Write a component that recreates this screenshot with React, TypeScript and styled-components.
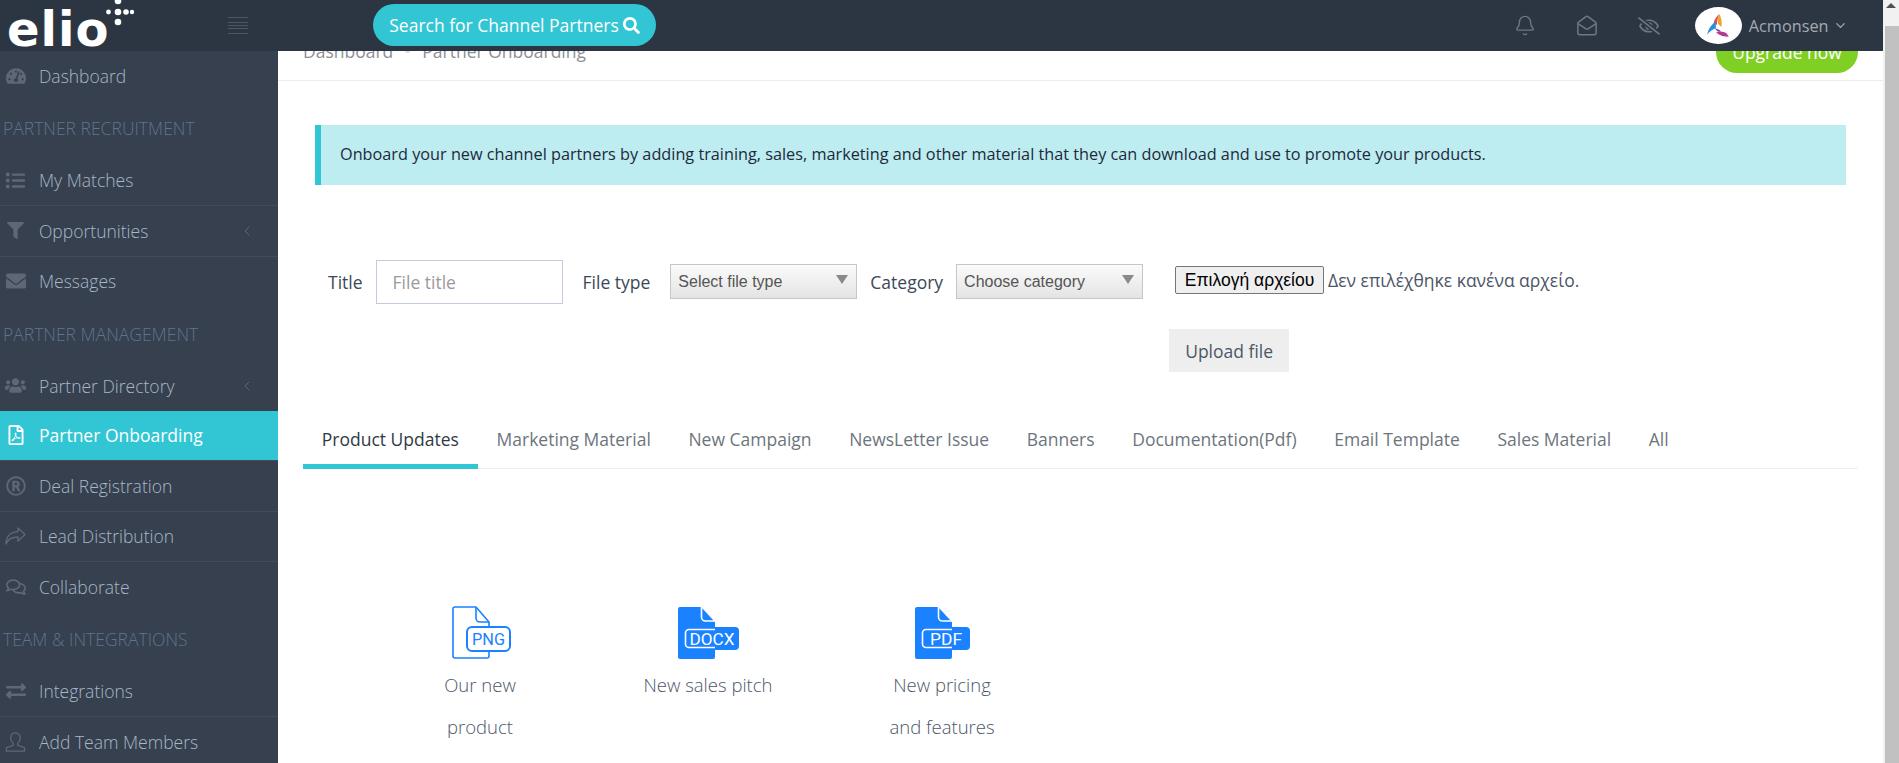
import styled, { createGlobalStyle } from 'styled-components';
import { Bell, ChevronDown, ChevronLeft, MailOpen } from 'lucide-react';
import {
  FaEnvelope,
  FaExchangeAlt,
  FaFilter,
  FaList,
  FaRegComments,
  FaRegEyeSlash,
  FaRegFilePdf,
  FaRegRegistered,
  FaSearch,
  FaTachometerAlt,
  FaUsers,
} from 'react-icons/fa';
import type { ReactNode } from 'react';

const GlobalStyle = createGlobalStyle`
  html, body {
    margin: 0;
    height: 100%;
    overflow: hidden;
    background: #fff;
  }
  #root {
    height: 100%;
  }
  * {
    box-sizing: border-box;
  }
`;

const Shell = styled.div`
  display: flex;
  height: 763px;
  font-family: 'Open Sans', sans-serif;
  font-size: 17.5px;
  color: #4c5667;
`;

const Page = styled.div`
  flex: 1;
  min-width: 0;
  display: flex;
  flex-direction: column;
`;

const ScrollTrack = styled.div`
  width: 16px;
  background: #f1f1f1;
  display: flex;
  flex-direction: column;
  align-items: center;
`;

const ScrollArrow = styled.div`
  height: 26px;
  padding-top: 3px;
  &::before {
    content: '';
    display: block;
    border-left: 5px solid transparent;
    border-right: 5px solid transparent;
    border-bottom: 5px solid #505050;
  }
`;

const ScrollThumb = styled.div`
  flex: 1;
  width: 14px;
  margin-left: 2px;
  background: #c1c1c1;
`;

const Header = styled.header`
  height: 51px;
  flex: none;
  display: flex;
  align-items: center;
  background: #2c3643;
  position: relative;
  z-index: 2;
`;

const Brand = styled.div`
  width: 228px;
  flex: none;
  display: flex;
  align-items: flex-start;
  height: 51px;
  padding-left: 7px;
`;

const BrandName = styled.span`
  font-family: 'DejaVu Sans', sans-serif;
  font-weight: 700;
  font-size: 48px;
  line-height: 43px;
  letter-spacing: 1px;
  color: #fff;
  margin-top: 8px;
`;

const BrandDots = styled.svg`
  width: 32px;
  height: 26px;
  margin-left: -3px;
  flex: none;
`;

const MenuLines = styled.div`
  width: 20px;
  height: 17px;
  margin-right: 125px;
  flex: none;
  border-top: 1px solid #4d5763;
  border-bottom: 1px solid #4d5763;
  position: relative;
  background: linear-gradient(#4d5763 0 0) center / 100% 1px no-repeat;
  &::before,
  &::after {
    content: '';
    position: absolute;
    left: 0;
    right: 0;
    height: 1px;
    background: #4d5763;
  }
  &::before {
    top: 4px;
  }
  &::after {
    bottom: 4px;
  }
`;

const SearchButton = styled.button`
  height: 42px;
  width: 283px;
  border: 0;
  border-radius: 21px;
  background: #32c6d4;
  color: #fff;
  font: 400 17.5px 'Open Sans', sans-serif;
  display: flex;
  align-items: center;
  justify-content: center;
  gap: 4px;
  padding: 0;
  margin-top: -1px;
`;

const HeaderRight = styled.div`
  margin-left: auto;
  display: flex;
  align-items: center;
`;

const HeaderIcon = styled.span`
  width: 22px;
  display: flex;
  justify-content: center;
  color: #6e7884;
  margin-right: 40px;
`;

const Avatar = styled.span`
  width: 47px;
  height: 37px;
  border-radius: 50%;
  background: #fff;
  display: flex;
  align-items: center;
  justify-content: center;
  margin-left: -5.5px;
`;

const UserName = styled.span`
  color: #a3aab2;
  margin-left: 7px;
  font-size: 16.25px;
`;

const UserCaret = styled.span`
  display: flex;
  color: #a3aab2;
  margin: 0 35px 0 4.5px;
`;

const Body = styled.div`
  flex: 1;
  min-height: 0;
  display: flex;
`;

const Sidebar = styled.nav`
  width: 278px;
  flex: none;
  background: #36404e;
  overflow: hidden;
  font-weight: 300;
`;

const SectionLabel = styled.div`
  height: 55px;
  display: flex;
  align-items: center;
  padding-left: 3px;
  color: #5f7390;
`;

const NavItem = styled.a<{ $active?: boolean; $divided?: boolean }>`
  height: ${(p) => (p.$divided ? 50.5 : 49.5)}px;
  display: flex;
  align-items: center;
  padding-left: 5px;
  color: ${(p) => (p.$active ? '#fff' : '#a9b7c9')};
  background: ${(p) => (p.$active ? '#32c6d4' : 'transparent')};
  font-weight: ${(p) => (p.$active ? 400 : 300)};
  border-top: ${(p) => (p.$divided ? '1px solid #414b59' : '0')};
`;

const NavIcon = styled.span<{ $active?: boolean }>`
  width: 21px;
  margin-right: 13px;
  display: flex;
  justify-content: center;
  color: ${(p) => (p.$active ? '#fff' : '#5d6775')};
`;

const NavCaret = styled.span`
  margin-left: auto;
  margin-right: 23px;
  display: flex;
  color: #5d6775;
`;

const Main = styled.main`
  flex: 1;
  min-width: 0;
  overflow: hidden;
`;

const TopBar = styled.div`
  height: 60px;
  margin-top: -30px;
  padding: 0 25px;
  display: flex;
  align-items: center;
  justify-content: space-between;
  border-bottom: 1px solid #e8edf1;
`;

const Crumbs = styled.div`
  display: flex;
  align-items: center;
  color: #8d9095;
`;

const CrumbDot = styled.span`
  width: 5px;
  height: 5px;
  border-radius: 50%;
  background: #d6d8db;
  margin: 0 12px;
`;

const UpgradeButton = styled.button`
  width: 142px;
  height: 42px;
  margin-top: 2px;
  border: 0;
  border-radius: 21px;
  background: #7fcf24;
  color: #fff;
  font: 400 17.5px 'Open Sans', sans-serif;
`;

const Notice = styled.div`
  margin: 44px 37px 0;
  height: 60px;
  display: flex;
  align-items: center;
  padding: 0 0 2px 19px;
  background: #bdecf1;
  border-left: 6px solid #32c6d4;
  color: #1d2a3a;
  font-size: 16.25px;
`;

const UploadForm = styled.form`
  margin-top: 75px;
  padding-left: 50px;
  display: flex;
  align-items: flex-start;
  height: 149px;
`;

const FieldLabel = styled.label`
  height: 44px;
  display: flex;
  align-items: center;
  flex: none;
  color: #3c4858;
`;

const TitleInput = styled.input`
  width: 187px;
  height: 44px;
  margin: 0 20px 0 13px;
  padding: 0 16px;
  border: 1px solid #c3cbdc;
  flex: none;
  font: 17.5px 'Open Sans', sans-serif;
  color: #4c5667;
  &::placeholder {
    color: #9a9a9a;
  }
`;

const SelectBox = styled.div<{ $left: number; $right: number }>`
  position: relative;
  width: 187px;
  margin: 4px ${(p) => p.$right}px 0 ${(p) => p.$left}px;
  flex: none;
  &::after {
    content: '';
    position: absolute;
    right: 9px;
    top: 11px;
    border-left: 6px solid transparent;
    border-right: 6px solid transparent;
    border-top: 9px solid #8a8a8a;
    pointer-events: none;
  }
`;

const Select = styled.select`
  appearance: none;
  width: 100%;
  height: 35px;
  padding: 0 7px 1px;
  border: 1px solid #c6c6c6;
  background: linear-gradient(#fbfbfb, #e4e4e4);
  border-radius: 0;
  font: 16px 'Liberation Sans', Arial, sans-serif;
  color: #555;
`;

const FileColumn = styled.div`
  margin-left: 32px;
  display: flex;
  flex-direction: column;
  align-items: flex-start;
`;

const FileRow = styled.div`
  display: flex;
  align-items: center;
  height: 28px;
  margin-top: 6px;
`;

const ChooseButton = styled.button`
  width: 149px;
  height: 28px;
  padding: 0;
  border: 1px solid #767676;
  border-radius: 2px;
  background: #efefef;
  color: #000;
  font: 17.5px 'Liberation Sans', Arial, sans-serif;
`;

const NoFile = styled.span`
  margin-left: 4px;
  margin-top: -1px;
  white-space: nowrap;
`;

const UploadButton = styled.button`
  width: 120px;
  height: 43px;
  margin: 35px 0 0 -6px;
  border: 0;
  background: #eee;
  color: #4c5667;
  font: 17.5px 'Open Sans', sans-serif;
`;

const Tabs = styled.div`
  margin: 0 25px;
  height: 60px;
  display: flex;
  border-bottom: 1px solid #eeeeee;
`;

const Tab = styled.a<{ $active?: boolean }>`
  height: 60px;
  padding: 5px 18.8px 0;
  display: flex;
  align-items: center;
  white-space: nowrap;
  color: ${(p) => (p.$active ? '#2f3a46' : '#6c757d')};
  border-bottom: 5px solid ${(p) => (p.$active ? '#32c6d4' : 'transparent')};
`;

const Files = styled.div`
  margin-top: 137px;
  padding-left: 142px;
  display: flex;
  align-items: flex-start;
`;

const FileCard = styled.div<{ $width: number; $gap: number }>`
  width: ${(p) => p.$width}px;
  margin-right: ${(p) => p.$gap}px;
  flex: none;
  display: flex;
  flex-direction: column;
  align-items: center;
  text-align: center;
`;

const FileSvg = styled.svg`
  overflow: visible;
  flex: none;
`;

const FileName = styled.div`
  margin-top: 4px;
  font-size: 18.5px;
  font-weight: 300;
  line-height: 42px;
  color: #4c5667;
`;

const BLUE = '#1a82ff';

function OutlineFile({ label }: { label: string }) {
  return (
    <FileSvg width="56" height="54" viewBox="0 0 56 54">
      <path
        d="M3 1h21l13 15v34a2 2 0 0 1-2 2H3a2 2 0 0 1-2-2V3a2 2 0 0 1 2-2z"
        fill="none"
        stroke={BLUE}
        strokeWidth="1.6"
      />
      <path d="M24 1v11a4 4 0 0 0 4 4h9" fill="none" stroke={BLUE} strokeWidth="1.6" />
      <rect x="15" y="21" width="43" height="24" rx="5" fill="#fff" stroke={BLUE} strokeWidth="2" />
      <text
        x="36.5"
        y="39"
        textAnchor="middle"
        textLength={33}
        lengthAdjust="spacingAndGlyphs"
        fontFamily="'Roboto', sans-serif"
        fontWeight="400"
        fontSize="17"
        fill={BLUE}
      >
        {label}
      </text>
    </FileSvg>
  );
}

function FilledFile({ label, size, textWidth }: { label: string; size: number; textWidth: number }) {
  return (
    <FileSvg width={size} height="54" viewBox={`0 0 ${size} 54`}>
      <path d="M3 1h21l14 15v35a2 2 0 0 1-2 2H3a2 2 0 0 1-2-2V3a2 2 0 0 1 2-2z" fill={BLUE} />
      <path d="M24.5 0v11a4 4 0 0 0 4 4h10" fill="none" stroke="#fff" strokeWidth="1.6" />
      <rect x="6" y="21" width={size - 6} height="23" rx="4" fill={BLUE} />
      <path d="M38 23.5H12a3.5 3.5 0 0 0-3.5 3.5v11a3.5 3.5 0 0 0 3.5 3.5h26" fill="none" stroke="#fff" strokeWidth="1.6" />
      <text
        x={(size + 6) / 2 + 1}
        y="38.5"
        textAnchor="middle"
        textLength={textWidth}
        lengthAdjust="spacingAndGlyphs"
        fontFamily="'Roboto', sans-serif"
        fontWeight="400"
        fontSize="17"
        fill="#fff"
      >
        {label}
      </text>
    </FileSvg>
  );
}

function ShareOutline() {
  return (
    <svg width="21" height="18" viewBox="0 0 21 18" fill="none" stroke="currentColor" strokeWidth="1.4">
      <path d="M13 1l7 6.5-7 6.5v-4C7 10 3 11.5 1 17c0-7 4-12 12-12.5z" strokeLinejoin="round" />
    </svg>
  );
}

function UserOutline() {
  return (
    <svg width="22" height="22" viewBox="0 0 22 22" fill="none" stroke="currentColor" strokeWidth="1.4">
      <path d="M11 1.5c-3.2 0-5 2.4-5 5.2 0 2.5 1 4.4 2.6 5.6v2.2L1.5 17v3.5h19V17l-7.1-2.5v-2.2c1.6-1.2 2.6-3.1 2.6-5.6 0-2.8-1.8-5.2-5-5.2z" />
    </svg>
  );
}

function AcmonsenMark() {
  return (
    <svg width="26" height="26" viewBox="0 0 24 24">
      <path d="M13 1c2 3 3 8 2 12l-3-3c0-3 0-6 1-9z" fill="#f0a030" />
      <path d="M13 1c-3 3-5 6-5 9l3 1c0-3 1-7 2-10z" fill="#e8503a" />
      <path d="M10 8C6 10 3 15 2 20c2-3 5-5 8-6z" fill="#2a8ce0" />
      <path d="M9 14c4 1 6 3 6 3-2 1-4 0-6-3z" fill="#6a3fb0" />
      <path d="M22 22c-4 0-8-1-12-4 4-1 8-1 10 1z" fill="#b03a90" />
    </svg>
  );
}

type Row = { label: string; icon: ReactNode; caret?: boolean; active?: boolean };

const recruitment: Row[] = [
  { label: 'My Matches', icon: <FaList size={19} /> },
  { label: 'Opportunities', icon: <FaFilter size={17} />, caret: true },
  { label: 'Messages', icon: <FaEnvelope size={20} /> },
];

const management: Row[] = [
  { label: 'Partner Directory', icon: <FaUsers size={25} />, caret: true },
  { label: 'Partner Onboarding', icon: <FaRegFilePdf size={20} />, active: true },
  { label: 'Deal Registration', icon: <FaRegRegistered size={20} /> },
  { label: 'Lead Distribution', icon: <ShareOutline /> },
  { label: 'Collaborate', icon: <FaRegComments size={20} /> },
];

const team: Row[] = [
  { label: 'Integrations', icon: <FaExchangeAlt size={20} /> },
  { label: 'Add Team Members', icon: <UserOutline /> },
];

const tabs = [
  'Product Updates',
  'Marketing Material',
  'New Campaign',
  'NewsLetter Issue',
  'Banners',
  'Documentation(Pdf)',
  'Email Template',
  'Sales Material',
  'All',
];

function NavRows({ rows }: { rows: Row[] }) {
  return (
    <div>
      {rows.map((row, i) => (
        <NavItem key={row.label} $active={row.active} $divided={i > 0 && !row.active}>
          <NavIcon $active={row.active}>{row.icon}</NavIcon>
          {row.label}
          {row.caret && (
            <NavCaret>
              <ChevronLeft size={16} strokeWidth={1.5} />
            </NavCaret>
          )}
        </NavItem>
      ))}
    </div>
  );
}

export default function App() {
  return (
    <Shell>
      <GlobalStyle />
      <Page>
        <Header>
          <Brand>
            <BrandName>elio</BrandName>
            <BrandDots viewBox="0 0 32 26" fill="#fff">
              <circle cx="12" cy="1" r="3.3" />
              <circle cx="2.5" cy="12" r="2.4" />
              <circle cx="12" cy="12" r="3.3" />
              <circle cx="20" cy="12" r="2.8" />
              <circle cx="26" cy="12" r="2.2" />
              <circle cx="12" cy="22" r="3.3" />
            </BrandDots>
          </Brand>
          <MenuLines />
          <SearchButton>
            Search for Channel Partners <FaSearch size={17} />
          </SearchButton>
          <HeaderRight>
            <HeaderIcon>
              <Bell size={25} strokeWidth={1.5} />
            </HeaderIcon>
            <HeaderIcon>
              <MailOpen size={25} strokeWidth={1.6} />
            </HeaderIcon>
            <HeaderIcon>
              <FaRegEyeSlash size={22} />
            </HeaderIcon>
            <Avatar>
              <AcmonsenMark />
            </Avatar>
            <UserName>Acmonsen</UserName>
            <UserCaret>
              <ChevronDown size={15} strokeWidth={2} />
            </UserCaret>
          </HeaderRight>
        </Header>
        <Body>
          <Sidebar>
            <NavRows rows={[{ label: 'Dashboard', icon: <FaTachometerAlt size={20} /> }]} />
            <SectionLabel>PARTNER RECRUITMENT</SectionLabel>
            <NavRows rows={recruitment} />
            <SectionLabel>PARTNER MANAGEMENT</SectionLabel>
            <NavRows rows={management} />
            <SectionLabel>TEAM &amp; INTEGRATIONS</SectionLabel>
            <NavRows rows={team} />
          </Sidebar>
          <Main>
            <TopBar>
              <Crumbs>
                Dashboard
                <CrumbDot />
                Partner Onboarding
              </Crumbs>
              <UpgradeButton>Upgrade now</UpgradeButton>
            </TopBar>
            <Notice>
              Onboard your new channel partners by adding training, sales, marketing and other material that they can
              download and use to promote your products.
            </Notice>
            <UploadForm>
              <FieldLabel>Title</FieldLabel>
              <TitleInput placeholder="File title" />
              <FieldLabel>File type</FieldLabel>
              <SelectBox $left={20} $right={13}>
                <Select defaultValue="type">
                  <option value="type">Select file type</option>
                </Select>
              </SelectBox>
              <FieldLabel>Category</FieldLabel>
              <SelectBox $left={13} $right={0}>
                <Select defaultValue="category">
                  <option value="category">Choose category</option>
                </Select>
              </SelectBox>
              <FileColumn>
                <FileRow>
                  <ChooseButton type="button">Επιλογή αρχείου</ChooseButton>
                  <NoFile>Δεν επιλέχθηκε κανένα αρχείο.</NoFile>
                </FileRow>
                <UploadButton type="button">Upload file</UploadButton>
              </FileColumn>
            </UploadForm>
            <Tabs>
              {tabs.map((tab, i) => (
                <Tab key={tab} $active={i === 0}>
                  {tab}
                </Tab>
              ))}
            </Tabs>
            <Files>
              <FileCard $width={120} $gap={88}>
                <OutlineFile label="PNG" />
                <FileName>Our new product</FileName>
              </FileCard>
              <FileCard $width={160} $gap={94}>
                <FilledFile label="DOCX" size={62} textWidth={45} />
                <FileName>New sales pitch</FileName>
              </FileCard>
              <FileCard $width={120} $gap={0}>
                <FilledFile label="PDF" size={56} textWidth={32} />
                <FileName>New pricing and features</FileName>
              </FileCard>
            </Files>
          </Main>
        </Body>
      </Page>
      <ScrollTrack>
        <ScrollArrow />
        <ScrollThumb />
      </ScrollTrack>
    </Shell>
  );
}
